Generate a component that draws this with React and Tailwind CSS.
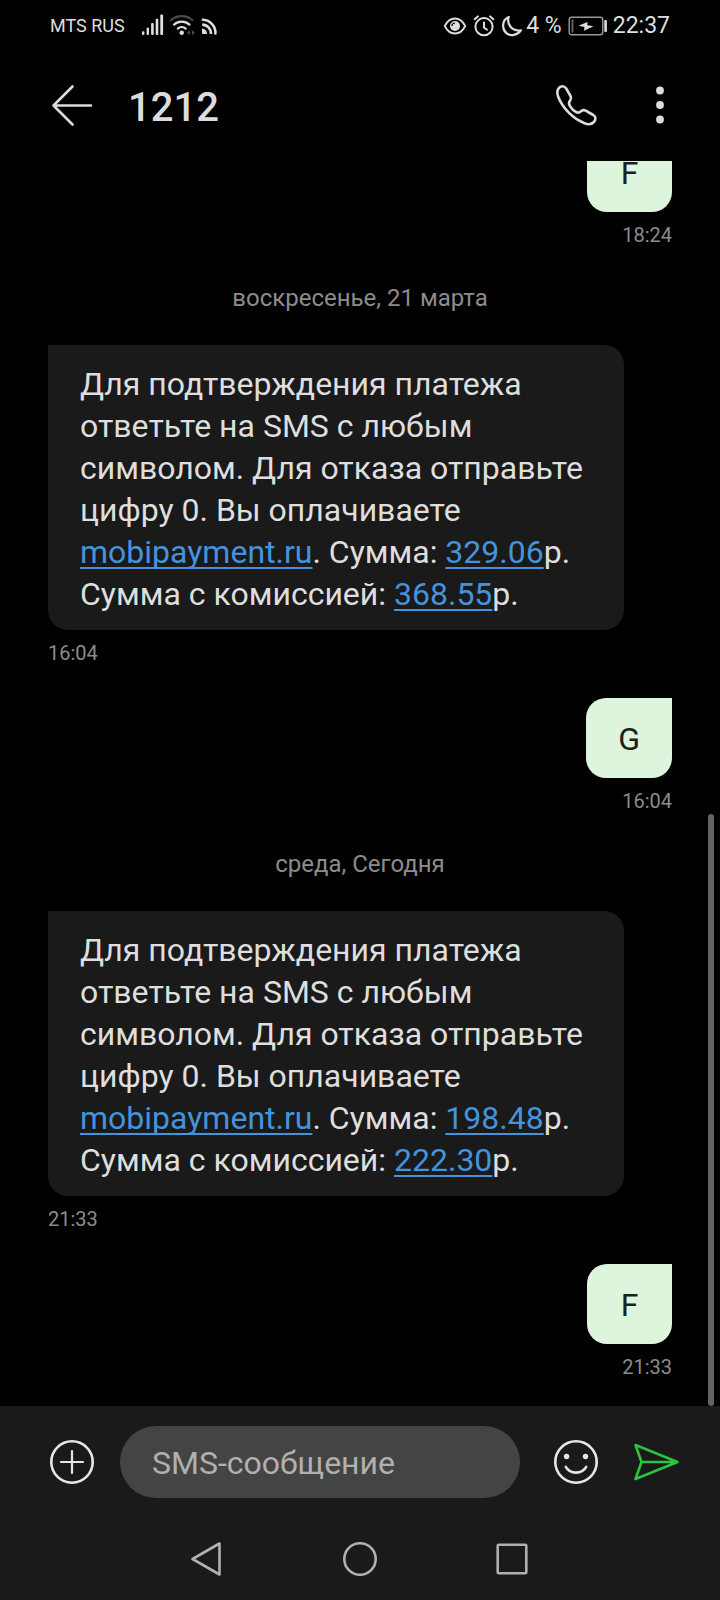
const messages = [
  { id: 1, type: "out", text: "F", time: "18:24" },
  { id: 2, type: "date", text: "воскресенье, 21 марта" },
  { id: 3, type: "in", sum: "329.06", total: "368.55", time: "16:04" },
  { id: 4, type: "out", text: "G", time: "16:04" },
  { id: 5, type: "date", text: "среда, Сегодня" },
  { id: 6, type: "in", sum: "198.48", total: "222.30", time: "21:33" },
  { id: 7, type: "out", text: "F", time: "21:33" },
];

const SignalIcon = () => (
  <svg width="24" height="24" viewBox="0 0 24 24" fill="currentColor">
    <rect x="1" y="18.3" width="2.4" height="3.7" rx="1" />
    <rect x="5.6" y="14.4" width="2.4" height="7.6" rx="1" />
    <rect x="10.1" y="10" width="2.6" height="12" rx="1" />
    <rect x="14.7" y="5.8" width="2.6" height="16.2" rx="1" />
    <rect x="19.3" y="1.6" width="2.8" height="20.4" rx="1" />
  </svg>
);

const WifiIcon = () => (
  <svg width="28" height="24" viewBox="0 0 28 24" fill="none" strokeWidth="2.2" strokeLinecap="round">
    <path d="M2 7.2C8 1.8 17.5 1.8 23.5 7.2" stroke="#4a4a4a" />
    <path d="M5 11.6C9.5 7.6 16 7.6 20.5 11.6" stroke="currentColor" />
    <path d="M8.8 15.6C11 13.6 14.5 13.6 16.7 15.6" stroke="currentColor" />
    <circle cx="12.7" cy="19.8" r="2.2" fill="currentColor" />
    <path d="M20.8 17.2v5l-3-2.5zM23 17.2v5l3-2.5z" fill="#4a4a4a" />
  </svg>
);

const CastIcon = () => (
  <svg width="20" height="24" viewBox="0 0 20 24" fill="none" stroke="currentColor" strokeWidth="2.6">
    <path d="M2 6.8A13 13 0 0 1 14.4 20.4" strokeLinecap="round" />
    <path d="M1.2 11.6A9 9 0 0 1 10 21" />
    <path d="M1 15.5A5 5 0 0 1 6 21H2Q1 21 1 20z" fill="currentColor" stroke="none" />
  </svg>
);

const EyeIcon = () => (
  <svg width="24" height="24" viewBox="0 0 24 24" fill="none" stroke="currentColor" strokeWidth="1.8">
    <path d="M1.8 13C4 8.5 7.5 5.5 12 5.5S20 8.5 22.2 13C20 17.5 16.5 20.5 12 20.5S4 17.5 1.8 13z" strokeLinejoin="round" />
    <circle cx="12" cy="13" r="5" fill="currentColor" stroke="none" />
    <path d="M9 13A3 3 0 0 1 12 10" stroke="#000" strokeWidth="1.2" />
  </svg>
);

const AlarmIcon = () => (
  <svg width="24" height="24" viewBox="0 0 24 24" fill="none" stroke="currentColor" strokeWidth="2" strokeLinecap="round">
    <circle cx="12" cy="13.7" r="8.6" />
    <path d="M12 9.5v5l3 2.2M2.6 6.2L5.8 3.4M21.4 6.2L18.2 3.4" />
  </svg>
);

const MoonIcon = () => (
  <svg width="24" height="24" viewBox="0 0 24 24" fill="none" stroke="currentColor" strokeWidth="2.2" strokeLinejoin="round">
    <path d="M8.7 4C4.5 6 2.6 10 3.3 14.5C4.2 20 9 23 14 21.9C17.5 21.2 19.7 19.5 21 17.3C17 18 13 16.8 10.5 13.8C8 10.8 7.6 7.5 8.7 4z" />
  </svg>
);

const BatteryIcon = () => (
  <svg width="40" height="24" viewBox="0 0 40 24" fill="none">
    <rect x="1.2" y="4.2" width="33.6" height="17.6" rx="2.5" stroke="#9a9a9a" strokeWidth="1.4" />
    <rect x="3.6" y="6.5" width="1.8" height="13" fill="#6a6a6a" />
    <path d="M19.5 9L10.5 12.8L16.5 14L16 17.8L25.5 13.2L19.3 12.2z" fill="currentColor" />
    <rect x="36.3" y="7" width="2.6" height="12" rx="1" fill="currentColor" />
  </svg>
);

const BackIcon = () => (
  <svg width="48" height="48" viewBox="0 0 48 48" fill="none" stroke="currentColor" strokeWidth="2.6" strokeLinecap="round" strokeLinejoin="round">
    <path d="M24.5 5.5L5.5 24.5L24.5 43.5M5.5 24.5H43" />
  </svg>
);

const PhoneIcon = () => (
  <svg width="48" height="48" viewBox="0 0 48 48" fill="none" stroke="currentColor" strokeWidth="2.6" strokeLinejoin="round">
    <path d="M6.5 7.5C8.5 4.5 12 4.5 14 7.2L18.5 15C19.4 16.6 19.2 17.8 18.2 19.2C16.4 21.6 16.6 23 17.8 24.8C19.5 27.6 21.7 30 24.5 31.3C26 32 27.8 31.4 29.3 30.1C30.6 29 32 28.8 33.7 29.6L41.3 34C44.3 35.9 43.8 38.8 41.9 41C39.6 43.5 36 43.7 32.5 42.3C27.5 40.2 22.5 37.4 17.5 32.4C12 26.9 8 20.8 6.1 15.5C5 12.5 5 10 6.5 7.5z" />
  </svg>
);

const MoreIcon = () => (
  <svg width="24" height="48" viewBox="0 0 24 48" fill="currentColor">
    <circle cx="12" cy="9.5" r="3.9" />
    <circle cx="12" cy="24" r="3.9" />
    <circle cx="12" cy="38.5" r="3.9" />
  </svg>
);

const PlusIcon = () => (
  <svg width="48" height="48" viewBox="0 0 48 48" fill="none" stroke="currentColor" strokeWidth="2.6" strokeLinecap="round">
    <circle cx="24" cy="24" r="20.7" />
    <path d="M24 13v22M13 24h22" strokeWidth="2.2" />
  </svg>
);

const SmileIcon = () => (
  <svg width="48" height="48" viewBox="0 0 48 48" fill="none" stroke="currentColor" strokeWidth="2.6" strokeLinecap="round">
    <circle cx="24" cy="24" r="20.7" />
    <circle cx="14.6" cy="18.5" r="2.7" fill="currentColor" stroke="none" />
    <circle cx="33.5" cy="18.5" r="2.7" fill="currentColor" stroke="none" />
    <path d="M13.8 28.8C18 36.5 30 36.5 34.2 28.8" />
  </svg>
);

const SendIcon = () => (
  <svg width="48" height="48" viewBox="0 0 48 48" fill="none" stroke="currentColor" strokeWidth="2.6" strokeLinejoin="round">
    <path d="M3.5 7L45.5 24L3.5 41L9.5 24zM9.5 24H45" />
  </svg>
);

const StatusBar = () => (
  <div className="flex h-[50px] shrink-0 items-center justify-between px-[50px] text-[#dedede]">
    <div className="flex items-center">
      <span className="mr-4 pt-0.5 text-lg">MTS RUS</span>
      <SignalIcon />
      <span className="ml-1">
        <WifiIcon />
      </span>
      <span className="ml-1">
        <CastIcon />
      </span>
    </div>
    <div className="flex items-center">
      <EyeIcon />
      <span className="ml-[5px]">
        <AlarmIcon />
      </span>
      <span className="ml-1">
        <MoonIcon />
      </span>
      <span className="ml-0.5 pt-0.5 text-[23px]">4 %</span>
      <span className="mr-[5px] ml-1.5">
        <BatteryIcon />
      </span>
      <span className="pt-0.5 text-[23px]">22:37</span>
    </div>
  </div>
);

const Header = () => (
  <header className="flex h-[111px] shrink-0 items-center px-12 pb-0.5 text-[#dcdcdc]">
    <button aria-label="Назад">
      <BackIcon />
    </button>
    <h1 className="ml-8 flex-1 pt-1.5 text-[40px] font-medium">1212</h1>
    <button aria-label="Позвонить">
      <PhoneIcon />
    </button>
    <button aria-label="Ещё" className="ml-12">
      <MoreIcon />
    </button>
  </header>
);

const Link = ({ href, children }) => (
  <a href={href} className="text-[#4593dc] underline decoration-2 underline-offset-4 [text-decoration-skip-ink:none]">
    {children}
  </a>
);

const Time = ({ children }) => (
  <time className="mt-[11px] block text-xl leading-6 text-[#8c8c8c]">{children}</time>
);

const Incoming = ({ message }) => (
  <div className="mr-12 mb-[33px] flex flex-col items-start">
    <p className="rounded-[20px] rounded-tl-none bg-[#1a1a1a] px-8 pt-[18px] pb-[15px] text-[32px] leading-[42px] text-[#dedede]">
      Для подтверждения платежа ответьте на SMS с любым символом. Для отказа
      отправьте цифру 0. Вы оплачиваете{" "}
      <Link href="#mobipayment">mobipayment.ru</Link>. Сумма:{" "}
      <Link href="#sum">{message.sum}</Link>р. Сумма с комиссией:{" "}
      <Link href="#total">{message.total}</Link>р.
    </p>
    <Time>{message.time}</Time>
  </div>
);

const Outgoing = ({ message }) => (
  <div className="flex flex-col items-end">
    <p className="min-w-[85px] rounded-[20px] rounded-tr-none bg-[#ddf4dd] px-8 pt-5 pb-[18px] text-center text-[32px] leading-[42px] text-[#1c211c]">
      {message.text}
    </p>
    <Time>{message.time}</Time>
  </div>
);

const DateLabel = ({ children }) => (
  <div className="mt-[35px] mb-[31px] text-center text-2xl leading-8 text-[#8c8c8c]">
    {children}
  </div>
);

const Composer = () => (
  <form className="flex items-center pt-5 pr-10 pl-12 text-[#e6e6e6]" onSubmit={(e) => e.preventDefault()}>
    <button type="button" aria-label="Прикрепить">
      <PlusIcon />
    </button>
    <input
      type="text"
      aria-label="SMS-сообщение"
      placeholder="SMS-сообщение"
      className="mr-8 ml-6 h-[72px] min-w-0 flex-1 rounded-full bg-[#444444] px-8 pt-0.5 text-[32px] placeholder:text-[#b0b0b0] focus:outline-none"
    />
    <button type="button" aria-label="Смайлы">
      <SmileIcon />
    </button>
    <button type="submit" aria-label="Отправить" className="ml-8 text-[#2ec23f]">
      <SendIcon />
    </button>
  </form>
);

const NavBar = () => (
  <nav className="mt-5 flex h-[82px] items-center justify-center text-[#b0b0b0]">
    <button aria-label="Назад" className="flex w-[152px] justify-center">
      <svg width="40" height="40" viewBox="0 0 40 40" fill="none" stroke="currentColor" strokeWidth="2.6" strokeLinejoin="round">
        <path d="M31.5 4.5V35.5L4.5 20z" />
      </svg>
    </button>
    <button aria-label="Домой" className="flex w-[152px] justify-center">
      <svg width="40" height="40" viewBox="0 0 40 40" fill="none" stroke="currentColor" strokeWidth="2.6">
        <circle cx="20" cy="20" r="15.7" />
      </svg>
    </button>
    <button aria-label="Недавние" className="flex w-[152px] justify-center">
      <svg width="40" height="40" viewBox="0 0 40 40" fill="none" stroke="currentColor" strokeWidth="2.6" strokeLinejoin="round">
        <rect x="5.7" y="5.7" width="28.6" height="28.6" rx="1" />
      </svg>
    </button>
  </nav>
);

const App = () => {
  return (
    <div className="flex h-screen flex-col bg-black font-[Roboto,sans-serif]">
      <StatusBar />
      <Header />

      <main className="relative flex min-h-0 flex-1 flex-col justify-end overflow-hidden px-12 pb-[27px]">
        {messages.map((message) => {
          if (message.type === "date") {
            return <DateLabel key={message.id}>{message.text}</DateLabel>;
          }
          return message.type === "in" ? (
            <Incoming key={message.id} message={message} />
          ) : (
            <Outgoing key={message.id} message={message} />
          );
        })}
        {/* scroll thumb */}
        <div className="absolute right-1.5 bottom-0 h-[592px] w-1.5 rounded-full bg-[#646464]" />
      </main>

      <footer className="shrink-0 bg-[#1a1a1a]">
        <Composer />
        <NavBar />
      </footer>
    </div>
  );
};

export default App;
